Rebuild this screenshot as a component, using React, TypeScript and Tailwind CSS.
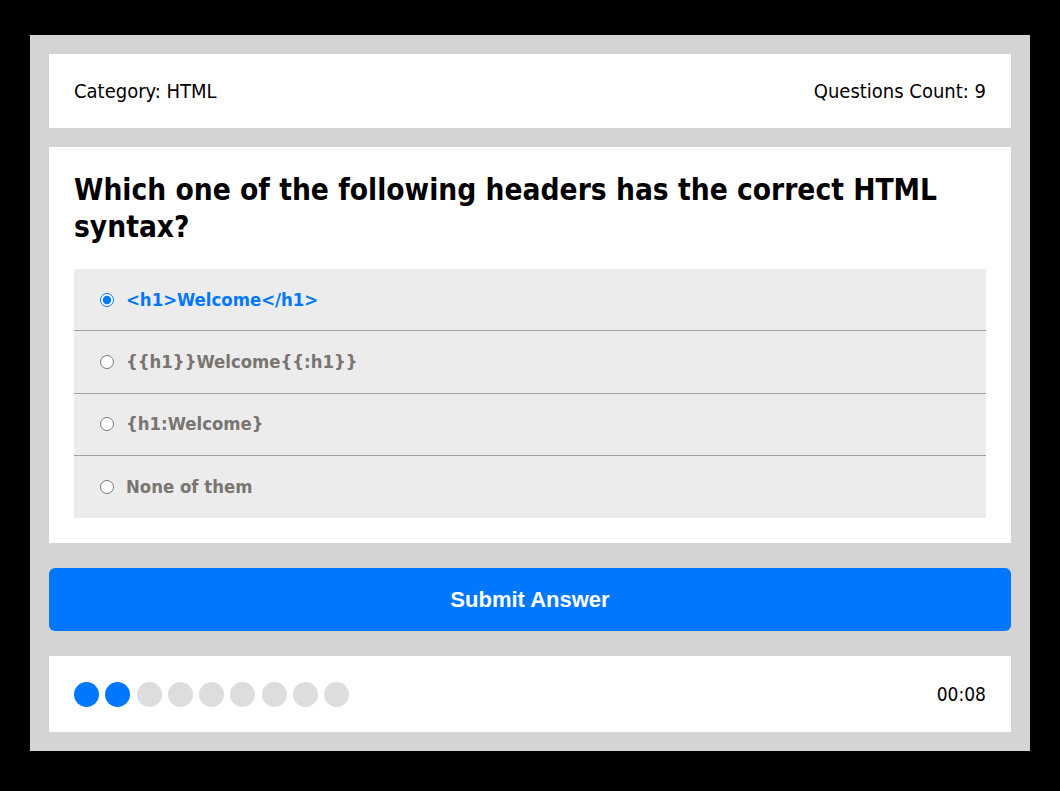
import { useState } from 'react';

const options = [
  { id: 'a', label: '<h1>Welcome</h1>' },
  { id: 'b', label: '{{h1}}Welcome{{:h1}}' },
  { id: 'c', label: '{h1:Welcome}' },
  { id: 'd', label: 'None of them' },
];

const TOTAL = 9;
const ANSWERED = 2;

export default function App() {
  const [selected, setSelected] = useState('a');

  return (
    <div className="min-h-[791px] bg-black pt-[35px] pl-[30px] font-['DejaVu_Sans_Condensed','DejaVu_Sans',sans-serif]">
      <div className="w-[1000px] bg-[#d4d4d4] p-[19px]">
        {/* Header */}
        <div className="flex h-[74px] items-center justify-between bg-white px-[25px] text-[20px] text-black">
          <span>Category: HTML</span>
          <span>Questions Count: {TOTAL}</span>
        </div>

        {/* Question */}
        <div className="mt-[19px] bg-white px-[25px] pt-[25px] pb-[25px]">
          <h1 className="text-[29.6px] font-bold leading-[37px] text-black">
            Which one of the following headers has the correct HTML syntax?
          </h1>
          <div className="mt-[23px] bg-[#ececec]">
            {options.map((option, i) => {
              const active = selected === option.id;
              return (
                <label
                  key={option.id}
                  className={
                    'flex h-[62.25px] cursor-pointer items-center gap-[12px] pl-[26px] ' +
                    (i < options.length - 1 ? 'border-b border-[#a0a0a0]' : '')
                  }
                >
                  <input
                    type="radio"
                    name="answer"
                    checked={active}
                    onChange={() => setSelected(option.id)}
                    className="m-0 h-[14px] w-[14px] accent-[#0077ff]"
                  />
                  <span
                    className={
                      'text-[18.4px] font-bold ' + (active ? 'text-[#0077ff]' : 'text-[#7a7570]')
                    }
                  >
                    {option.label}
                  </span>
                </label>
              );
            })}
          </div>
        </div>

        {/* Submit */}
        <button className="mt-[25px] flex h-[63px] w-full items-center justify-center rounded-[6px] bg-[#0077ff] font-['Liberation_Sans',Arial,sans-serif] text-[22px] font-bold text-white">
          Submit Answer
        </button>

        {/* Footer */}
        <div className="mt-[25px] flex h-[76px] items-center justify-between bg-white px-[25px]">
          <div className="flex gap-[6.25px]">
            {Array.from({ length: TOTAL }).map((_, i) => (
              <span
                key={i}
                className={
                  'block h-[25px] w-[25px] rounded-full ' +
                  (i < ANSWERED ? 'bg-[#0077ff]' : 'bg-[#dddddd]')
                }
              />
            ))}
          </div>
          <span className="text-[19px] text-black">00:08</span>
        </div>
      </div>
    </div>
  );
}
